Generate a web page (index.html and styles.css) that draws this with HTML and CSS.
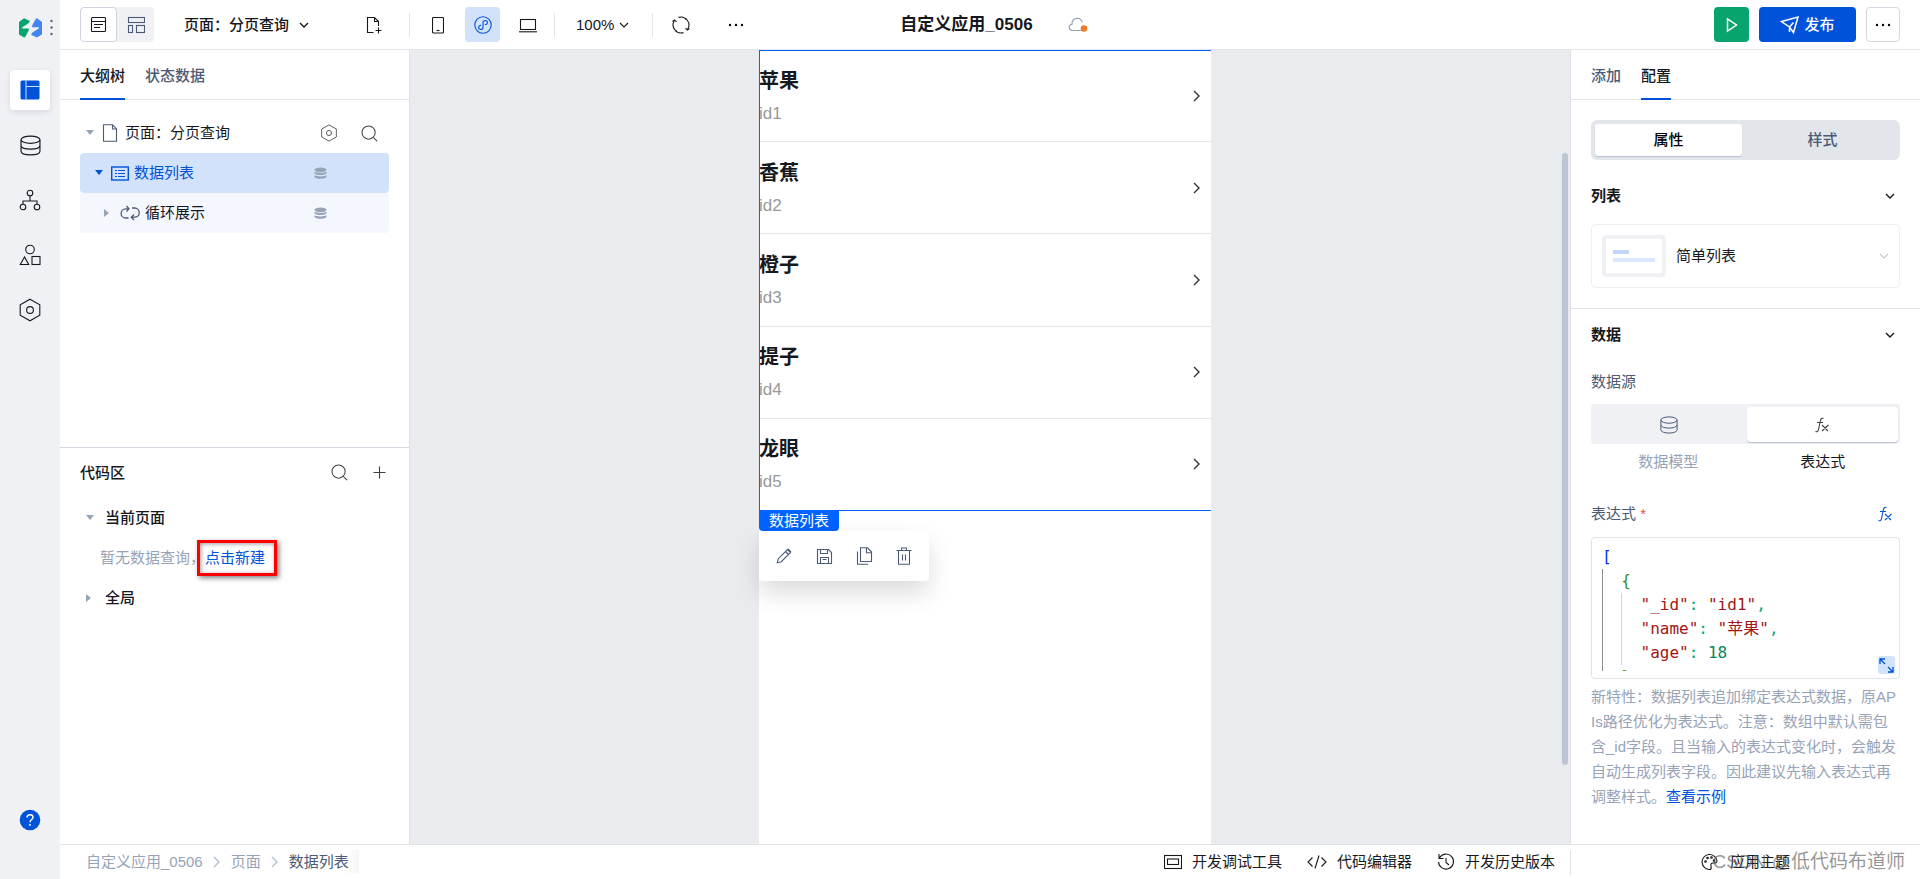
FILE: index.html
```html
<!DOCTYPE html>
<html lang="zh-CN">
<head>
<meta charset="utf-8">
<meta name="viewport" content="width=device-width, initial-scale=1">
<title>自定义应用_0506</title>
<link rel="stylesheet" href="styles.css">
</head>
<body>
<svg class="sprite" aria-hidden="true">
  <symbol id="chev" viewBox="0 0 10 10"><path d="M1 3l4 4 4-4"/></symbol>
  <symbol id="next" viewBox="0 0 10 14"><path d="M2 2l5 5-5 5"/></symbol>
  <symbol id="search" viewBox="0 0 18 18"><circle cx="8" cy="8" r="7"/><path d="M13 13l4 4"/></symbol>
  <symbol id="db" viewBox="0 0 20 20"><ellipse cx="10" cy="4.500" rx="9" ry="3.500"/><path d="M1 4.500v11c0 4.600 18 4.600 18 0v-11M1 10c0 4.600 18 4.600 18 0"/></symbol>
  <symbol id="dbfill" viewBox="0 0 14 13"><ellipse cx="7" cy="2.500" rx="6.500" ry="2.500"/><path d="M.5 4.500c2 1.600 11 1.600 13 0v1.700c-1 2.500-12 2.500-13 0zM.5 8.500c2 1.600 11 1.600 13 0v1.700c-1 2.500-12 2.500-13 0z"/></symbol>
  <symbol id="hex" viewBox="0 0 22 24"><path d="M11 1.200l9.800 5.500v10.600L11 22.800l-9.800-5.500V6.700z"/><circle cx="11" cy="12" r="3.400"/></symbol>
  <symbol id="fx" viewBox="0 0 16 16"><path d="M9.500 1.500C7.500.8 6.700 2 6.300 4L4.500 12.500c-.4 2-1.500 2.600-3 2M3 5.500h6M8 8l6 6M14.500 8L8 14"/></symbol>
</svg>

<div class="app">
  <nav class="rail" aria-label="主导航">
    <div class="brand">
      <svg viewBox="0 0 23 20" width="23" height="20" aria-hidden="true"><path fill="#07a56d" d="M0 4L5 .2 11 3 9.500 5.200 3 9.500l.3 1H10l-.5 2.500L6 19.200l-1 .3-5-3z"/><path fill="#4285f0" d="M18 .2l5 3.800v12.200l-5 3.300-6-2.800 1.500-2.200L20 10.200l-.3-1H13l.5-2.500L17 .5z"/></svg>
      <svg width="3" height="17" viewBox="0 0 3 17" fill="#5b6270" aria-hidden="true"><circle cx="1.500" cy="2" r="1.200"/><circle cx="1.500" cy="8.500" r="1.200"/><circle cx="1.500" cy="15" r="1.200"/></svg>
    </div>
    <button class="rail-btn active" aria-label="布局"><svg width="20" height="20" viewBox="0 0 20 20"><rect x=".5" y=".5" width="19" height="19" rx="1.500" fill="#0052d9"/><path d="M6 .5v19M6 6.500h13.500" fill="none" stroke="#cfe0fb"/></svg></button>
    <button class="rail-btn" aria-label="数据"><svg class="line" width="21" height="21"><use href="#db"/></svg></button>
    <button class="rail-btn" aria-label="流程"><svg class="line" width="22" height="22" viewBox="0 0 22 22"><circle cx="11" cy="4" r="2.800"/><circle cx="4" cy="18" r="2.800"/><circle cx="18" cy="18" r="2.800"/><path d="M11 7v5M4 15v-3h14v3"/></svg></button>
    <button class="rail-btn" aria-label="组件"><svg class="line" width="22" height="22" viewBox="0 0 22 22"><circle cx="11" cy="5.500" r="4.300"/><path d="M5.500 13L1.300 20.500h8.400z"/><rect x="13" y="12.500" width="8" height="8"/></svg></button>
    <button class="rail-btn" aria-label="设置"><svg class="line" width="22" height="24"><use href="#hex"/></svg></button>
    <button class="rail-btn help" aria-label="帮助"><svg width="22" height="22" viewBox="0 0 22 22"><circle cx="11" cy="11" r="10.300" fill="#0052d9"/><path d="M8 8.500c.2-4 6.300-3.600 6 0-.2 1.900-3 2.300-3 4.700M11 15v1.800" fill="none" stroke="#fff" stroke-width="1.500"/></svg></button>
  </nav>

  <div class="work">
    <header class="topbar">
      <div class="tools">
        <div class="view-switch">
          <button class="active" aria-label="大纲视图"><svg class="line" width="17" height="17" viewBox="0 0 17 17"><rect x="1.500" y="1.500" width="14" height="14" rx="1"/><path d="M1.500 5.500h14M4 8.500h9M4 11.500h6"/></svg></button>
          <button aria-label="布局视图"><svg class="line slate" width="18" height="18" viewBox="0 0 18 18"><rect x="1.500" y="1.500" width="16" height="5"/><rect x="1.500" y="9.500" width="4" height="7"/><rect x="9.500" y="9.500" width="8" height="7"/></svg></button>
        </div>
        <button class="page-select">页面：分页查询<svg class="line" width="10" height="10"><use href="#chev"/></svg></button>
        <button class="tool" aria-label="新建页面"><svg class="line" width="18" height="18" viewBox="0 0 18 18"><path d="M8.500 16.500h-6v-15h7l4 4V10M9.500 1.500v4h4M13.500 11.500v6M10.500 14.500h6"/></svg></button>
        <i class="rule"></i>
        <div class="devices">
          <button class="tool" aria-label="手机"><svg class="line" width="12" height="18" viewBox="0 0 12 18"><rect x=".5" y="1.500" width="11" height="15.500" rx="1"/><path d="M4.500 14.500h3"/></svg></button>
          <button class="tool active" aria-label="小程序"><svg class="line blue" width="18" height="18" viewBox="0 0 18 18"><circle cx="9" cy="9" r="8.200"/><path d="M10.800 8.800c3.400-.2 3.300-4.300.6-4.300-1.400 0-2.400.9-2.400 2.300v4.400c0 1.400-1 2.300-2.400 2.300-2.700 0-2.800-4.100.6-4.300"/></svg></button>
          <button class="tool" aria-label="电脑"><svg class="line" width="18" height="16" viewBox="0 0 18 16"><rect x="1.500" y="2.500" width="15" height="10"/><path d="M0 14.800h18"/></svg></button>
        </div>
        <i class="rule"></i>
        <button class="zoom">100%<svg class="line" width="10" height="10"><use href="#chev"/></svg></button>
        <i class="rule"></i>
        <div class="actions">
          <button class="tool" aria-label="刷新"><svg class="line" width="20" height="20" viewBox="0 0 20 20"><path d="M7.500 2.400A8 8 0 0 1 16.500 14.500M12.500 17.600A8 8 0 0 1 3.500 5.500"/><path d="M1.500 6.500l2.200-1.500L5.500 7M18.500 13.500l-2.200 1.500-1.800-2M4.500 15.500l1.500 1.200M14 3.300l1.500 1.200"/></svg></button>
          <button class="tool" aria-label="更多"><svg width="16" height="4" viewBox="0 0 16 4"><circle cx="2" cy="2" r="1.200"/><circle cx="8" cy="2" r="1.200"/><circle cx="14" cy="2" r="1.200"/></svg></button>
        </div>
      </div>
      <div class="app-title">
        <h1>自定义应用_0506</h1>
        <svg width="20" height="16" viewBox="0 0 20 16" aria-label="未保存"><path d="M14 13.500H4.500C.2 13.500 0 7.500 4 7.300 3.700 0 13.500-.5 14.200 5.500" fill="none" stroke="#97a3b7" stroke-width="1.200"/><circle cx="16" cy="11.500" r="3.300" fill="#ed7b2f"/></svg>
      </div>
      <div class="publish">
        <button class="run" aria-label="预览"><svg width="14" height="16" viewBox="0 0 14 16"><path d="M2.500 2v12l9-6z" fill="none" stroke="#fff" stroke-width="1.500"/></svg></button>
        <button class="primary"><svg width="20" height="20" viewBox="0 0 20 20"><path d="M1.500 6.500L18 2l-4.500 15.500-4-5.500zM9.500 12V17M9.500 12l4-4.500" fill="none" stroke="#fff" stroke-width="1.500"/></svg>发布</button>
        <button class="more" aria-label="更多"><svg width="16" height="4" viewBox="0 0 16 4"><circle cx="2" cy="2" r="1.200"/><circle cx="8" cy="2" r="1.200"/><circle cx="14" cy="2" r="1.200"/></svg></button>
      </div>
    </header>

    <main class="body">
      <aside class="explorer">
        <section class="outline">
          <div class="tabs" role="tablist">
            <button class="active" role="tab" aria-selected="true">大纲树</button>
            <button role="tab" aria-selected="false">状态数据</button>
          </div>
          <ul class="tree">
            <li class="node root"><i class="tri down"></i><svg class="line slate" width="16" height="18" viewBox="0 0 16 18"><path d="M1.500.7h9l4 4.300v12.300h-13zM10.500.7V5h4"/></svg><span class="name">页面：分页查询</span>
              <span class="node-tools"><button aria-label="页面设置"><svg class="line gray" width="18" height="18"><use href="#hex"/></svg></button><button aria-label="搜索"><svg class="line gray" width="17" height="17"><use href="#search"/></svg></button></span></li>
            <li class="node list selected"><i class="tri down blue"></i><svg class="line blue" width="18" height="15" viewBox="0 0 18 15"><rect x=".7" y="1" width="16.600" height="13" stroke-width="1.400"/><path d="M4 4.500h2M7 4.500h7M4 7.500h2M7 7.500h7M4 10.500h2M7 10.500h7"/></svg><span class="name">数据列表</span><svg class="bound" width="13" height="13"><use href="#dbfill"/></svg></li>
            <li class="node loop"><i class="tri side"></i><svg class="line slate" width="20" height="16" viewBox="0 0 20 16"><path d="M8.500 13H5.700a4.600 4.600 0 0 1 0-9.200H8M6.500 1l2.500 2.800L6.500 6.500M12 3h2.700a4.600 4.600 0 0 1 0 9.200H12M14 9.500l-2.700 2.700L14 15" stroke-width="1.300"/></svg><span class="name">循环展示</span><svg class="bound" width="13" height="13"><use href="#dbfill"/></svg></li>
          </ul>
        </section>
        <section class="code-area">
          <div class="area-head"><h2>代码区</h2><button aria-label="搜索"><svg class="line gray" width="17" height="17"><use href="#search"/></svg></button><button aria-label="新建"><svg class="line gray" width="13" height="13" viewBox="0 0 13 13"><path d="M6.500.5v12M.5 6.500h12"/></svg></button></div>
          <div class="group"><i class="tri down"></i>当前页面</div>
          <div class="empty">暂无数据查询，<a class="create" href="#">点击新建</a></div>
          <div class="group"><i class="tri side"></i>全局</div>
        </section>
      </aside>

      <section class="canvas">
        <div class="device">
          <ul class="fruits">
            <li><div><h3>苹果</h3><p>id1</p></div><svg class="line" width="10" height="14"><use href="#next"/></svg></li>
            <li><div><h3>香蕉</h3><p>id2</p></div><svg class="line" width="10" height="14"><use href="#next"/></svg></li>
            <li><div><h3>橙子</h3><p>id3</p></div><svg class="line" width="10" height="14"><use href="#next"/></svg></li>
            <li><div><h3>提子</h3><p>id4</p></div><svg class="line" width="10" height="14"><use href="#next"/></svg></li>
            <li><div><h3>龙眼</h3><p>id5</p></div><svg class="line" width="10" height="14"><use href="#next"/></svg></li>
          </ul>
          <span class="tag">数据列表</span>
          <div class="floatbar">
            <button aria-label="编辑"><svg class="line slate" width="16" height="16" viewBox="0 0 16 16"><path d="M1.300 14.700l1-4L11.500 1.500l3 3-9.200 9.200zM9.500 3.500l3 3M12 1l3 3"/></svg></button>
            <button aria-label="保存"><svg class="line slate" width="17" height="17" viewBox="0 0 17 17"><path d="M1.500 1.500h11l3 3v11h-14zM4.500 1.500v4h7v-4M4.500 15.500v-6h8v6M6.500 11.500h4"/></svg></button>
            <button aria-label="复制"><svg class="line slate" width="17" height="18" viewBox="0 0 17 18"><path d="M4.500.8h7l4 4v9.700h-11zM10.500.8v5h5M1.500 4.500v12.700H12"/></svg></button>
            <button aria-label="删除"><svg class="line slate" width="16" height="18" viewBox="0 0 16 18"><path d="M.5 3.500h15M2.500 3.500v13.700h11V3.500M5.500 3.500V1h5v2.500M6.500 7.500v6M9.500 7.500v6"/></svg></button>
          </div>
        </div>
        <div class="thumb"></div>
      </section>

      <aside class="settings">
        <div class="tabs" role="tablist">
          <button role="tab" aria-selected="false">添加</button>
          <button class="active" role="tab" aria-selected="true">配置</button>
        </div>
        <section class="block">
          <div class="segment">
            <button class="active">属性</button>
            <button>样式</button>
          </div>
          <div class="block-head"><h2>列表</h2><svg class="line" width="10" height="10"><use href="#chev"/></svg></div>
          <button class="template"><span class="preview"><i></i><i></i></span><span>简单列表</span><svg class="line" width="10" height="10"><use href="#chev"/></svg></button>
        </section>
        <section class="block data">
          <div class="block-head"><h2>数据</h2><svg class="line" width="10" height="10"><use href="#chev"/></svg></div>
          <p class="field-label">数据源</p>
          <div class="source">
            <button aria-label="数据模型"><svg class="line slate" width="18" height="18"><use href="#db"/></svg></button>
            <button class="active" aria-label="表达式"><svg class="line gray" width="16" height="16"><use href="#fx"/></svg></button>
          </div>
          <div class="source-names"><span>数据模型</span><span class="active">表达式</span></div>
          <div class="expr-head"><span>表达式 <b>*</b></span><button aria-label="表达式编辑"><svg class="line blue" width="16" height="16"><use href="#fx"/></svg></button></div>
          <div class="editor">
            <pre tabindex="0"><code><span class="c-blue">[</span>
  <span class="c-green">{</span>
    <span class="c-red">"_id"</span><span class="c-teal">:</span> <span class="c-red">"id1"</span><span class="c-teal">,</span>
    <span class="c-red">"name"</span><span class="c-teal">:</span> <span class="c-red">"苹果"</span><span class="c-teal">,</span>
    <span class="c-red">"age"</span><span class="c-teal">:</span> <span class="c-num">18</span>
  <span class="c-green">}</span></code></pre>
            <button class="expand" aria-label="展开"><svg class="line blue" width="17" height="17" viewBox="0 0 17 17"><path d="M2 7V2h5M2 2l5 5M15 10v5h-5M15 15l-5-5" stroke-width="1.300"/></svg></button>
          </div>
          <p class="hint">新特性：数据列表追加绑定表达式数据，原APIs路径优化为表达式。注意：数组中默认需包含_id字段。且当输入的表达式变化时，会触发自动生成列表字段。因此建议先输入表达式再调整样式。<a href="#">查看示例</a></p>
        </section>
      </aside>
    </main>

    <footer class="status">
      <nav class="crumbs" aria-label="路径"><a href="#">自定义应用_0506</a><svg class="line" width="10" height="14"><use href="#next"/></svg><a href="#">页面</a><svg class="line" width="10" height="14"><use href="#next"/></svg><a class="current" href="#">数据列表</a></nav>
      <div class="dev">
        <button><svg class="line" width="18" height="16" viewBox="0 0 18 16"><rect x=".5" y="1.500" width="17" height="13"/><rect x="3.500" y="5" width="11" height="5.500"/></svg>开发调试工具</button>
        <button><svg class="line" width="20" height="14" viewBox="0 0 20 14"><path d="M5.500 2.500L1 7l4.500 4.500M14.500 2.500L19 7l-4.500 4.500M12 .5L8 13.500"/></svg>代码编辑器</button>
        <button><svg class="line" width="18" height="18" viewBox="0 0 18 18"><path d="M2.500 4.800A7.500 7.500 0 1 1 1.500 9M2 1v4.500h4.500M9 5v4.500l3 2.500"/></svg>开发历史版本</button>
      </div>
      <div class="theme">
        <button><svg class="line" width="17" height="18" viewBox="0 0 17 18"><path d="M9 16.500A7.500 7.500 0 1 1 16 8c0 2.500-2.500 2-4 2-2 0-2.500 1.500-2 3 .3 1.300.6 3-1 3.500z"/><circle cx="4.500" cy="8.500" r=".8"/><circle cx="6.500" cy="5" r=".8"/><circle cx="10.500" cy="4.500" r=".8"/><circle cx="13" cy="7.500" r=".8"/></svg>应用主题</button>
        <span class="credit">CSDN @低代码布道师</span>
      </div>
    </footer>
  </div>
</div>
</body>
</html>
```
FILE: styles.css
```css
* { box-sizing: border-box; }

body {
  margin: 0;
  font: 15px/24px "Liberation Sans", "Noto Sans CJK SC", sans-serif;
  color: #16181d;
  background: #fff;
}

h1, h2, h3, p, ul, pre { margin: 0; padding: 0; }
ul { list-style: none; }
a { color: #0052d9; text-decoration: none; }
svg { display: block; flex: none; }

button {
  display: flex;
  align-items: center;
  justify-content: center;
  margin: 0;
  padding: 0;
  border: 0;
  background: none;
  font: inherit;
  color: inherit;
  cursor: pointer;
}

.sprite { position: absolute; width: 0; height: 0; }
.line { fill: none; stroke: #16181d; stroke-width: 1.1; }
.line.slate { stroke: #4b5b76; }
.line.gray { stroke: #3c4047; }
.line.blue { stroke: #0052d9; }

.app { display: flex; min-height: 100vh; }

/* Navigation rail */
.rail {
  display: flex;
  flex-direction: column;
  align-items: center;
  gap: 15px;
  flex: none;
  width: 60px;
  padding-bottom: 39px;
  background: #f0f1f5;
}
.brand {
  display: flex;
  align-items: center;
  gap: 8px;
  width: 100%;
  height: 55px;
  padding-left: 19px;
}
.rail-btn { width: 40px; height: 40px; border-radius: 4px; }
.rail-btn.active { background: #fff; box-shadow: 0 2px 6px rgba(30, 50, 90, .12); }
.rail-btn.help { margin-top: auto; }

.work { display: flex; flex: 1; flex-direction: column; min-width: 0; }

/* Top bar */
.topbar {
  display: grid;
  grid-template-columns: 1fr auto 1fr;
  align-items: center;
  height: 50px;
  padding: 0 20px;
  border-bottom: 1px solid #e2e4e9;
}
.tools, .devices, .actions, .publish, .view-switch { display: flex; align-items: center; }
.view-switch { margin-right: 30px; border-radius: 4px; background: #f0f1f5; }
.view-switch button { width: 37px; height: 35px; border: 1px solid transparent; border-radius: 4px; }
.view-switch .active { border-color: #cfd5df; background: #fff; }
.page-select { gap: 10px; margin-right: 47px; font-weight: 500; }
.tool { width: 35px; height: 35px; border-radius: 4px; }
.tool.active { background: #d3e2fb; }
.rule { width: 1px; height: 24px; margin-left: 18px; background: #e2e4e9; }
.devices { gap: 10px; margin-left: 10px; }
.devices + .rule { margin-left: 9px; }
.zoom { gap: 5px; margin-left: 21px; }
.zoom + .rule { margin-left: 23px; }
.actions { gap: 20px; margin-left: 10px; }
.app-title { display: flex; align-items: center; gap: 35px; padding: 1px 0 0 8px; }
.app-title h1 { font-size: 17px; font-weight: 700; }
.publish { gap: 10px; justify-content: flex-end; }
.publish button { height: 35px; border-radius: 4px; }
.publish .run { width: 35px; background: #07a56d; }
.publish .primary { gap: 4px; width: 97px; background: #0052d9; color: #fff; font-weight: 500; }
.publish .more { width: 34px; border: 1px solid #d3d7df; }

/* Main area */
.body { display: flex; flex: 1; }

.tabs { display: flex; gap: 20px; height: 50px; padding: 0 20px; border-bottom: 1px solid #e2e4e9; }
.tabs button {
  height: 50px;
  padding-top: 3px;
  border-bottom: 2px solid transparent;
  color: #4b5b76;
  font-weight: 500;
}
.tabs .active { border-color: #0052d9; color: #16181d; }

.explorer { display: flex; flex-direction: column; flex: none; width: 350px; border-right: 1px solid #dfe2e8; }
.outline, .code-area { flex: 1; }
.tree { padding: 13px 20px; }
.node { display: flex; align-items: center; height: 40px; padding-left: 6px; border-radius: 4px; }
.node .name { margin-left: 5px; }
.node.root .name { margin-left: 7px; }
.node.list { padding-left: 15px; }
.node.loop { padding-left: 24px; background: #f4f7fe; }
.node.selected { background: #d3e2fb; color: #0052d9; }
.node-tools { display: flex; margin-left: auto; }
.node-tools button, .area-head button { width: 40px; height: 40px; }
.bound { margin: 0 62px 0 auto; fill: #97a3b7; }

.tri { flex: none; margin-right: 8px; border: 4px solid transparent; }
.tri.down { margin-top: 3px; border-top: 5px solid #97a3b7; }
.tri.side { border-left: 5px solid #97a3b7; border-right-width: 3px; }
.tri.down.blue { border-top-color: #0052d9; }

.code-area { padding: 0 20px; border-top: 1px solid #d3d7df; }
.area-head { display: flex; align-items: center; height: 50px; margin-right: -10px; }
.area-head h2 { flex: 1; font-size: 15px; font-weight: 500; }
.group { display: flex; align-items: center; gap: 3px; height: 40px; padding-left: 6px; font-weight: 500; }
.empty { display: flex; align-items: center; height: 40px; padding-left: 20px; color: #97a3b7; white-space: nowrap; }
.create {
  margin-left: -8px;
  padding: 3px 9px 3px 5px;
  border: 3px solid #fe0000;
  box-shadow: 2px 2px 5px rgba(0, 0, 0, .5), inset 1px 1px 4px rgba(0, 0, 0, .4);
}

/* Canvas */
.canvas { display: flex; position: relative; flex: 1; justify-content: center; padding-right: 10px; background: #eaebef; }
.thumb { position: absolute; top: 13%; right: 2px; width: 6px; height: 77%; border-radius: 3px; background: #bcc5d1; }
.device { width: 452px; background: #fff; }
.fruits { display: grid; grid-auto-rows: 1fr; position: relative; min-height: 461px; }
.fruits::after {
  content: "";
  position: absolute;
  inset: 0;
  border: solid #0062ff;
  border-width: 1px 0 1px 1px;
  pointer-events: none;
}
.fruits li { display: flex; align-items: center; justify-content: space-between; padding-right: 9px; border-bottom: 1px solid #e5e5e5; }
.fruits div { padding-top: 3px; }
.fruits h3 { font-size: 20px; font-weight: 700; line-height: 32px; }
.fruits p { color: #999; font-size: 17px; line-height: 33px; }
.fruits .line { stroke: #333; stroke-width: 1.4; }
.tag {
  display: block;
  width: max-content;
  padding: 0 10px;
  border-radius: 0 0 4px 4px;
  background: #0062ff;
  color: #fff;
  line-height: 20px;
}
.floatbar {
  display: flex;
  width: max-content;
  padding: 5px;
  border-radius: 4px;
  background: #fff;
  box-shadow: 0 12px 24px rgba(0, 0, 0, .14);
}
.floatbar button { width: 40px; height: 40px; }

/* Settings panel */
.settings { flex: none; width: 350px; border-left: 1px solid #dfe2e8; }
.block { padding: 20px; }
.segment { display: grid; grid-template-columns: 1fr 1fr; gap: 7px; padding: 4px; border-radius: 6px; background: #e2e5ea; }
.segment button { height: 32px; border-radius: 3px; color: #4b5b76; font-weight: 500; }
.segment .active { background: #fff; color: #000; box-shadow: 0 1px 1px #b4bfd0; }
.block-head { display: flex; align-items: center; justify-content: space-between; padding-right: 5px; }
.block-head h2 { font-size: 15px; font-weight: 700; }
.segment + .block-head { margin: 24px 0 16px; }
.block-head .line, .page-select .line { stroke-width: 1.4; }
.template {
  justify-content: flex-start;
  gap: 10px;
  width: 100%;
  height: 64px;
  padding: 0 10px;
  border: 1px solid #eef0f4;
  border-radius: 4px;
}
.template .line { margin-left: auto; stroke: #c4c9d2; }
.preview { display: flex; flex-direction: column; justify-content: center; gap: 4px; width: 64px; height: 42px; padding: 0 7px; border: 4px solid #f0f1f5; border-radius: 4px; }
.preview i { width: 16px; height: 4px; background: #c3d7fb; }
.preview i + i { width: 42px; background: #dbe8fd; }

.data { padding-top: 14px; border-top: 1px solid #dfe2e8; }
.field-label { margin: 23px 0 10px; color: #4b5b76; }
.source { display: grid; grid-template-columns: 1fr 1fr; gap: 2px; padding: 3px 2px 2px; border-radius: 4px; background: #f0f1f5; }
.source button { height: 35px; border-radius: 4px; }
.source .active { background: #fff; box-shadow: 0 1px 1px #b4bfd0; }
.source-names { display: grid; grid-template-columns: 1fr 1fr; margin-top: 6px; color: #97a3b7; text-align: center; }
.source-names .active { color: #16181d; }
.expr-head { display: flex; align-items: center; justify-content: space-between; margin: 28px 0 11px; padding-right: 7px; color: #4b5b76; }
.expr-head b { color: #e34d59; font-weight: 400; }
.editor { position: relative; height: 142px; padding: 7px 10px; border: 1px solid #dfe2e8; border-radius: 4px; }
.editor pre { height: 126px; overflow: hidden; font: 16px/24px "DejaVu Sans Mono", "Noto Sans CJK SC", monospace; }
.editor code { display: block; position: relative; font: inherit; }
.editor code::before, .editor code::after { content: ""; position: absolute; width: 1px; }
.editor code::before { top: 24px; bottom: 0; left: 0; background: #8d8d8d; }
.editor code::after { top: 48px; bottom: 24px; left: 19px; background: #d3d3d3; }
.c-blue { color: #0431fa; }
.c-green { color: #319331; }
.c-teal { color: #07a56d; }
.c-red { color: #a31515; }
.c-num { color: #098658; }
.expand { position: absolute; right: 4px; bottom: 4px; width: 17px; height: 18px; border-radius: 3px; background: #d3e2fb; }
.hint { margin-top: 5px; color: #97a3b7; line-height: 25px; word-break: break-all; }

/* Status bar */
.status { display: flex; align-items: center; height: 35px; border-top: 1px solid #dfe2e8; }
.crumbs { display: flex; flex: 1; align-items: center; gap: 9px; padding-left: 26px; }
.crumbs a { color: #97a3b7; }
.crumbs .line { stroke: #b4bfd0; stroke-width: 1.4; }
.crumbs .current { padding-right: 10px; background: linear-gradient(90deg, #fff 80%, #f5f6f8); color: #4b5b76; }
.dev { display: flex; gap: 25px; padding-right: 15px; }
.dev button { gap: 10px; }
.theme { display: flex; position: relative; align-items: center; justify-content: center; width: 350px; height: 25px; border-left: 1px solid #dfe2e8; }
.theme button { gap: 12px; }
.credit { position: absolute; right: 15px; color: rgba(90, 90, 90, .65); font-size: 19px; white-space: nowrap; }
```
